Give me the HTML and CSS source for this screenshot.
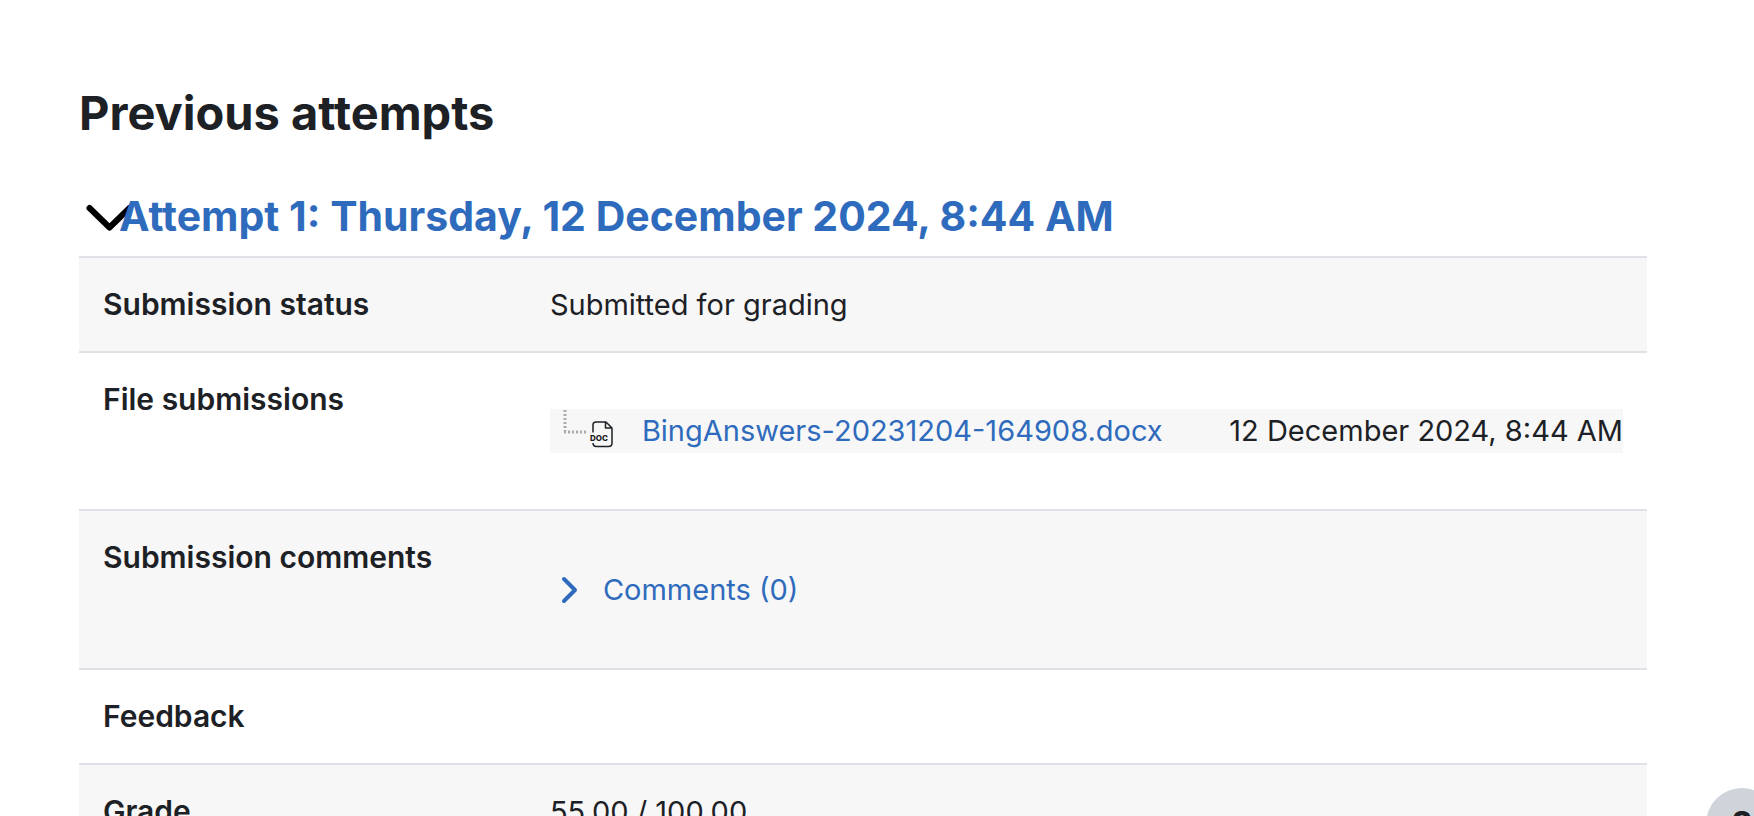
FILE: index.html
```html
<!DOCTYPE html>
<html lang="en">
<head>
<meta charset="utf-8">
<title>Previous attempts</title>
<link rel="stylesheet" href="styles.css">
</head>
<body>
<main class="page">
  <h2 class="page-title">Previous attempts</h2>
  <h3 class="attempt">
    <svg class="attempt-chevron" viewBox="0 0 46 30" aria-hidden="true"><path d="M5.500 7 L25.500 26.500 L45.500 7"/></svg>
    <a class="attempt-link" href="#attempt-1">Attempt 1: Thursday, 12 December 2024, 8:44 AM</a>
  </h3>
  <table class="summary" id="attempt-1">
    <tbody>
      <tr><th scope="row">Submission status</th><td>Submitted for grading</td></tr>
      <tr>
        <th scope="row">File submissions</th>
        <td>
          <div class="file">
            <span class="file-name">
              <svg class="tree" viewBox="0 0 24 26" aria-hidden="true"><path d="M2 1V22M1 23H24"/></svg>
              <svg class="doc-icon" viewBox="0 0 24 28" aria-hidden="true">
                <path d="M3 12.500V5Q3 2 6 2H16L22 8V23Q22 26.500 18.500 26.500H6.500Q3 26.500 3 23M15.500 2V8H22"/>
                <text x="0" y="21">DOC</text>
              </svg>
              <a class="file-link" href="#file">BingAnswers-20231204-164908.docx</a>
            </span>
            <span class="file-date">12 December 2024, 8:44 AM</span>
          </div>
        </td>
      </tr>
      <tr>
        <th scope="row">Submission comments</th>
        <td>
          <a class="comments" href="#comments">
            <svg class="comments-chevron" viewBox="0 0 18 28" aria-hidden="true"><path d="M3 3L14 14L3 25"/></svg>
            <span>Comments (0)</span>
          </a>
        </td>
      </tr>
      <tr><th scope="row">Feedback</th><td></td></tr>
      <tr><th scope="row">Grade</th><td>55.00 / 100.00</td></tr>
    </tbody>
  </table>
</main>
<button class="help" type="button" aria-label="Help">?</button>
</body>
</html>
```

FILE: styles.css
```css
body {
  margin: 0;
  background: #fff;
  color: #1d2125;
  font: 29px/45px Inter, "Liberation Sans", sans-serif;
}
a { color: #2f6bbd; text-decoration: none; }
.page { height: 100vh; box-sizing: border-box; padding: 84px 107px 0 79px; overflow: hidden; }
.page-title { margin: 0 0 48px; font-size: 47px; line-height: 58px; font-weight: 700; }
.attempt {
  display: flex;
  align-items: center;
  margin: 0;
  padding: 0 0 14px 5px;
  font-size: 41px;
  line-height: 52px;
  font-weight: 700;
}
.attempt-chevron { width: 46px; height: 30px; margin-right: -11px; flex: none; overflow: visible; }
.attempt-chevron path { fill: none; stroke: #000; stroke-width: 6; stroke-linecap: round; stroke-linejoin: round; }
.attempt-link { position: relative; }
.summary { width: 100%; table-layout: fixed; border-collapse: separate; border-spacing: 0; }
.summary th, .summary td {
  padding: 24px;
  border-top: 2px solid #dee2e6;
  text-align: left;
  vertical-align: top;
}
.summary th { width: 28.5%; box-sizing: border-box; font-size: 30px; font-weight: 600; white-space: nowrap; }
.summary tr:nth-child(odd) { background: #f7f7f7; }
.file {
  display: flex;
  justify-content: space-between;
  margin: 32px 0;
  line-height: 44px;
  background: #f7f7f7;
  white-space: nowrap;
}
.file-name { display: flex; }
.tree { width: 24px; height: 26px; margin-left: 13px; }
.tree path { fill: none; stroke: #aaa; stroke-width: 3; stroke-dasharray: 2 2; }
.doc-icon { width: 24px; height: 28px; margin: 11px 28px 0 3px; overflow: visible; }
.doc-icon path { fill: none; stroke: #1d2125; stroke-width: 1.5; stroke-linejoin: round; }
.doc-icon text { fill: #1d2125; font: 800 8px Inter, sans-serif; }
.comments { display: flex; align-items: center; gap: 24px; margin: 32px 0; padding-left: 11px; }
.comments-chevron { width: 18px; height: 28px; }
.comments-chevron path { fill: none; stroke: #2f6bbd; stroke-width: 4; stroke-linecap: round; stroke-linejoin: round; }
.help {
  position: fixed;
  right: -24px;
  bottom: -44px;
  width: 72px;
  height: 72px;
  padding: 0;
  border: 0;
  border-radius: 50%;
  background: #ced4da;
  color: #1d2125;
  font: 700 36px/72px Inter, sans-serif;
}
```
